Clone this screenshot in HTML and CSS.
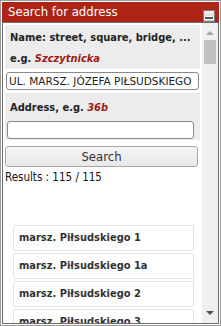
FILE: index.html
```html
<!DOCTYPE html>
<html>
<head>
<meta charset="utf-8">
<link rel="stylesheet" href="styles.css">
</head>
<body>
<div class="win">
  <div class="header">
    <span class="title">Search for address</span>
    <span class="min"><span class="min-bar"></span></span>
  </div>
  <div class="body">
    <div class="content">
      <div class="sec sec1">
        <div class="lbl">Name: street, square, bridge, ...</div>
        <div class="lbl">e.g. <em class="ex">Szczytnicka</em></div>
      </div>
      <div class="inp inp1">UL. MARSZ. JÓZEFA PIŁSUDSKIEGO</div>
      <div class="sec sec2">
        <div class="lbl">Address, e.g. <em class="ex">36b</em></div>
        <div class="inp inp2"></div>
      </div>
      <div class="btn">Search</div>
      <div class="results">Results : 115 / 115</div>
      <div class="list">
        <div class="item">marsz. Piłsudskiego 1</div>
        <div class="item">marsz. Piłsudskiego 1a</div>
        <div class="item">marsz. Piłsudskiego 2</div>
        <div class="item">marsz. Piłsudskiego 3</div>
      </div>
    </div>
    <div class="scroll">
      <div class="arr arr-up"></div>
      <div class="thumb"></div>
      <div class="track"></div>
      <div class="arr arr-down"></div>
    </div>
  </div>
</div>
</body>
</html>
```
FILE: styles.css
```css
* { box-sizing: border-box; }
html, body { margin: 0; padding: 0; background: #fff; }
body {
  font-family: "DejaVu Sans", sans-serif;
  font-stretch: condensed;
  color: #222;
}
.win {
  width: 221px;
  height: 326px;
  border: 1px solid #9a9a9a;
  padding: 1px;
  display: flex;
  flex-direction: column;
}
.header {
  height: 20px;
  background: #b02416;
  display: flex;
  align-items: flex-end;
  justify-content: space-between;
  flex: none;
}
.title {
  color: #fff;
  font-size: 13px;
  line-height: 20px;
  padding-left: 6px;
  align-self: center;
}
.min {
  width: 12px;
  height: 12px;
  margin-right: 4px;
  border: 1px solid #7a7a7a;
  background: linear-gradient(#f2f2f2, #c9c9c9);
  display: flex;
  align-items: flex-end;
  justify-content: center;
  padding-bottom: 2px;
}
.min-bar {
  width: 8px;
  height: 2px;
  background: #555;
  outline: 1px solid #fff;
}
.body {
  flex: 1;
  border: 1px solid #6e6e6e;
  display: flex;
  overflow: hidden;
}
.content {
  flex: 1;
  padding: 2px 2px 0 2px;
  overflow: hidden;
}
.sec {
  background: #ececec;
}
.sec1 {
  height: 44px;
  padding: 2px 5px 0;
}
.lbl {
  font-size: 11px;
  font-weight: bold;
  line-height: 21px;
  color: #222;
  white-space: nowrap;
}
.ex {
  color: #9a1c14;
  font-style: italic;
}
.inp {
  height: 18px;
  border: 1px solid #8a8a8a;
  border-radius: 3px;
  background: #fff;
  font-size: 10.5px;
  font-stretch: normal;
  line-height: 16px;
  padding-left: 2px;
  color: #222;
  white-space: nowrap;
  overflow: hidden;
}
.inp1 {
  width: 193px;
  margin: 3px 0 0 1px;
}
.sec2 {
  margin-top: 3px;
  height: 47px;
  padding: 4px 0 0 2px;
}
.sec2 .lbl { padding-left: 3px; }
.inp2 {
  width: 187px;
  margin-top: 3px;
}
.btn {
  width: 193px;
  height: 21px;
  margin-top: 6px;
  border: 1px solid #a8a8a8;
  border-radius: 3px;
  background: linear-gradient(#f4f4f4, #e8e8e8);
  color: #333;
  font-size: 13px;
  line-height: 19px;
  text-align: center;
}
.results {
  font-size: 11.5px;
  line-height: 14px;
  margin: 3px 0 0 0;
  color: #111;
}
.list {
  margin: 41px 0 0 8px;
  display: flex;
  flex-direction: column;
  gap: 2px;
}
.item {
  width: 181px;
  height: 26px;
  flex: none;
  border: 1px solid #e2e2e2;
  border-radius: 2px;
  background: #fff;
  font-size: 11px;
  font-weight: bold;
  line-height: 24px;
  padding-left: 5px;
  color: #333;
  white-space: nowrap;
}
.scroll {
  width: 16px;
  flex: none;
  background: #f0f0f0;
  display: flex;
  flex-direction: column;
  align-items: center;
}
.arr {
  width: 0;
  height: 0;
  border-left: 4px solid transparent;
  border-right: 4px solid transparent;
  flex: none;
}
.arr-up {
  margin-top: 8px;
  border-bottom: 4px solid #a3a3a3;
}
.thumb {
  width: 12px;
  height: 24px;
  margin-top: 5px;
  background: #c1c1c1;
  flex: none;
}
.track { flex: 1; }
.arr-down {
  margin-bottom: 8px;
  border-top: 4px solid #505050;
}
```
